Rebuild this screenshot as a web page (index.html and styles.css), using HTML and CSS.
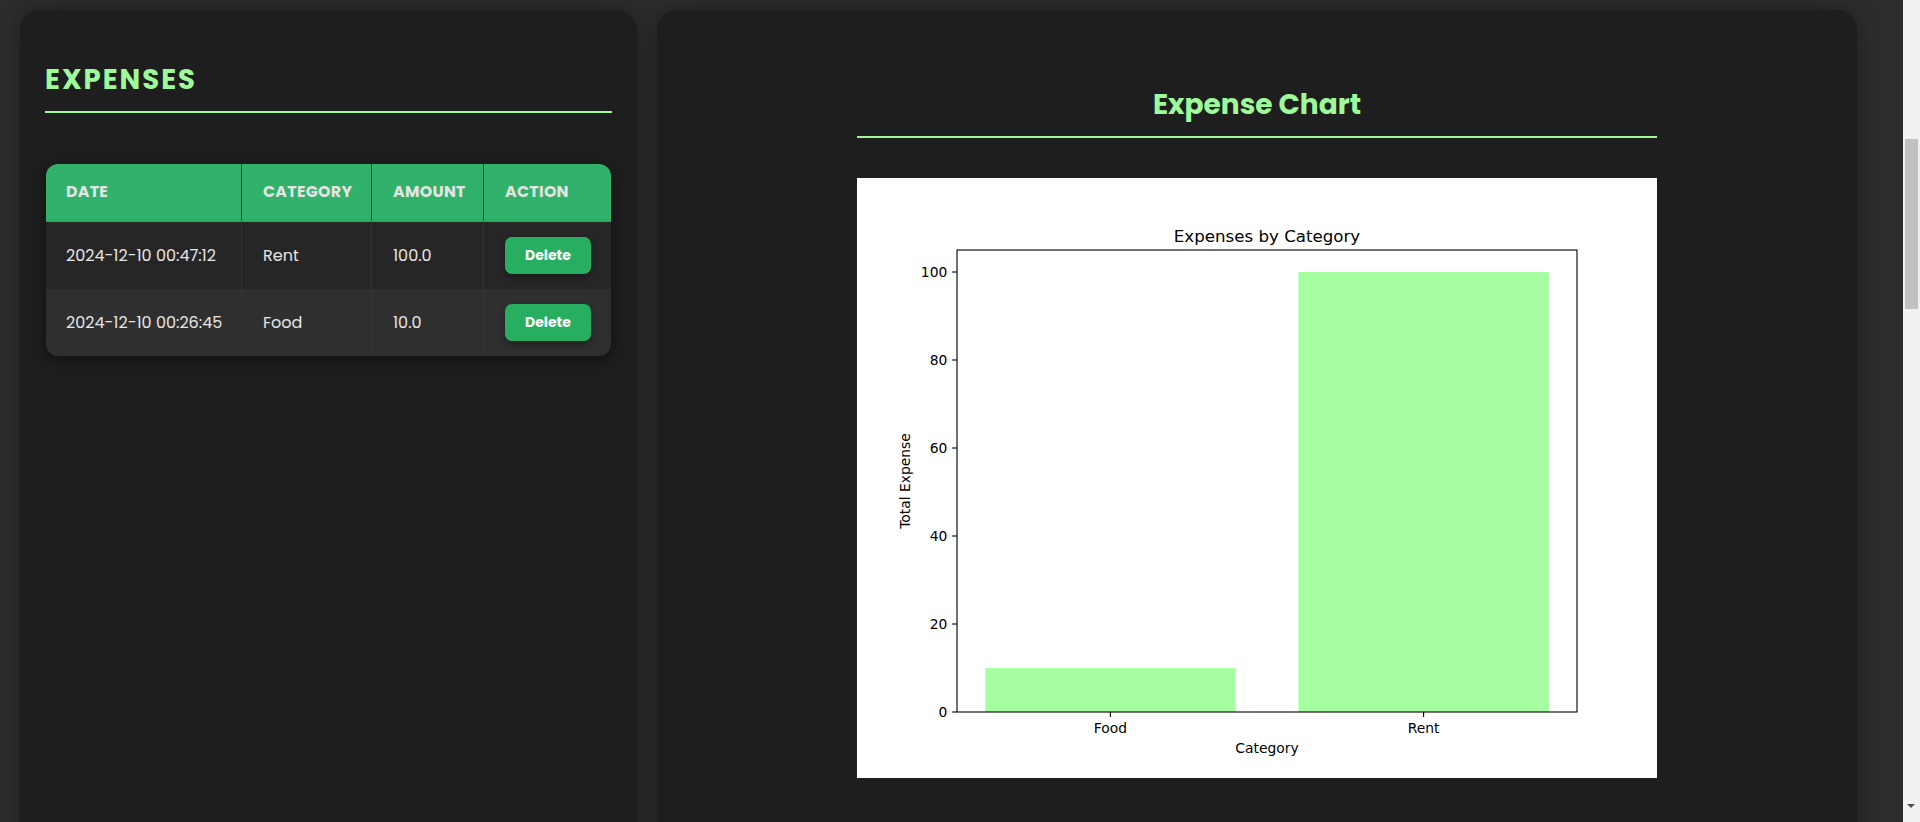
FILE: index.html
```html
<!DOCTYPE html>
<html lang="en">
<head>
<meta charset="utf-8">
<title>Expense Tracker</title>
<link rel="stylesheet" href="styles.css">
</head>
<body>
<main class="dashboard">
  <section class="panel panel-expenses">
    <h2 class="panel-title">Expenses</h2>
    <table class="expense-table">
      <colgroup>
        <col class="col-date">
        <col class="col-category">
        <col class="col-amount">
        <col class="col-action">
      </colgroup>
      <thead>
        <tr><th>Date</th><th>Category</th><th>Amount</th><th>Action</th></tr>
      </thead>
      <tbody>
        <tr>
          <td>2024-12-10 00:47:12</td><td>Rent</td><td>100.0</td>
          <td><button class="btn-delete" type="button">Delete</button></td>
        </tr>
        <tr>
          <td>2024-12-10 00:26:45</td><td>Food</td><td>10.0</td>
          <td><button class="btn-delete" type="button">Delete</button></td>
        </tr>
      </tbody>
    </table>
  </section>

  <section class="panel panel-chart">
    <div class="chart-box">
      <h2 class="chart-title">Expense Chart</h2>
      <svg class="chart" width="800" height="600" viewBox="0 0 800 600" xmlns="http://www.w3.org/2000/svg">
        <rect x="0" y="0" width="800" height="600" fill="#ffffff"/>
        <rect x="128.2" y="490" width="250.5" height="44" fill="#a5ffa1"/>
        <rect x="441.4" y="94" width="250.5" height="440" fill="#a5ffa1"/>
        <rect x="100" y="72" width="620" height="462" fill="none" stroke="#000" stroke-width="1.1"/>
        <g stroke="#000" stroke-width="1.1">
          <line x1="100" y1="534" x2="95.1" y2="534"/>
          <line x1="100" y1="446" x2="95.1" y2="446"/>
          <line x1="100" y1="358" x2="95.1" y2="358"/>
          <line x1="100" y1="270" x2="95.1" y2="270"/>
          <line x1="100" y1="182" x2="95.1" y2="182"/>
          <line x1="100" y1="94" x2="95.1" y2="94"/>
          <line x1="253.4" y1="534" x2="253.4" y2="538.9"/>
          <line x1="566.6" y1="534" x2="566.6" y2="538.9"/>
        </g>
        <g class="tick" text-anchor="end">
          <text x="90.3" y="539">0</text>
          <text x="90.3" y="451">20</text>
          <text x="90.3" y="363">40</text>
          <text x="90.3" y="275">60</text>
          <text x="90.3" y="187">80</text>
          <text x="90.3" y="99">100</text>
        </g>
        <g class="tick" text-anchor="middle">
          <text x="253.4" y="555">Food</text>
          <text x="566.6" y="555">Rent</text>
          <text x="410" y="575">Category</text>
        </g>
        <text class="tick" x="53.3" y="303" text-anchor="middle" transform="rotate(-90 53.3 303)">Total Expense</text>
        <text class="chart-heading" x="410" y="64" text-anchor="middle">Expenses by Category</text>
      </svg>
    </div>
  </section>
</main>
<div class="scrollbar" aria-hidden="true">
  <div class="scrollbar-thumb"></div>
  <div class="scrollbar-arrow"></div>
</div>
</body>
</html>
```

FILE: styles.css
```css
html, body {
  margin: 0;
  padding: 0;
}

body {
  background: #2d2d2d;
  color: #e6e6e6;
  font-family: "Poppins", "Inter", "Noto Sans", sans-serif;
}

.dashboard {
  display: grid;
  grid-template-columns: 617px 1200px;
  gap: 20px;
  padding: 10px 20px;
  align-items: stretch;
}

.panel {
  background: #1e1e1e;
  border-radius: 20px;
  box-shadow: 0 0 24px rgba(0, 0, 0, 0.35);
  padding: 25px;
  min-height: 3730px;
  box-sizing: border-box;
}

.panel-title {
  margin: 29px 0 0;
  padding-bottom: 15px;
  border-bottom: 2px solid #9efa98;
  color: #9efa98;
  font-size: 27.5px;
  line-height: 32px;
  font-weight: 700;
  letter-spacing: 2px;
  text-transform: uppercase;
}

.expense-table {
  margin-top: 51px;
  width: 565px;
  margin-left: 1px;
  table-layout: fixed;
  border-collapse: separate;
  border-spacing: 0;
  border-radius: 12px;
  overflow: hidden;
  box-shadow: 0 4px 14px rgba(0, 0, 0, 0.45);
  font-size: 16px;
}

.col-date { width: 196px; }
.col-category { width: 130px; }
.col-amount { width: 112px; }
.col-action { width: 127px; }

.expense-table th {
  background: #30b26a;
  color: #e4e4e4;
  text-align: left;
  font-weight: 700;
  font-size: 15.8px;
  letter-spacing: 0.3px;
  text-transform: uppercase;
  height: 58px;
  padding: 0 20px 0 21px;
  box-sizing: border-box;
  border-bottom: 3px solid #27ae60;
  border-right: 1px solid #1f3d2c;
}

.expense-table th:first-child,
.expense-table td:first-child {
  padding-left: 20px;
}

.expense-table th:last-child,
.expense-table td:last-child {
  border-right: none;
}

.expense-table td {
  padding: 15px 20px 15px 21px;
  border-right: 1px solid #333333;
  color: #e6e6e6;
  vertical-align: middle;
  white-space: nowrap;
}

.expense-table tbody tr:nth-child(1) td { background: #262626; }
.expense-table tbody tr:nth-child(2) td { background: #2f2f2f; }

.btn-delete {
  background: #27ae60;
  color: #ffffff;
  border: none;
  border-radius: 7px;
  font-family: inherit;
  font-weight: 700;
  font-size: 14px;
  line-height: 19px;
  padding: 9px 20px;
  box-shadow: 0 3px 6px rgba(0, 0, 0, 0.35);
  cursor: pointer;
}

.chart-box {
  width: 800px;
  margin: 0 auto;
}

.chart-title {
  margin: 52px 0 0;
  padding-bottom: 14px;
  border-bottom: 2px solid #9efa98;
  color: #9efa98;
  text-align: center;
  font-size: 28px;
  line-height: 35px;
  font-weight: 700;
}

.chart {
  display: block;
  margin-top: 40px;
}

.chart .tick {
  font-family: "DejaVu Sans", sans-serif;
  font-size: 13.89px;
  fill: #000;
}

.chart .chart-heading {
  font-family: "DejaVu Sans", sans-serif;
  font-size: 16.67px;
  fill: #000;
}

.scrollbar {
  position: fixed;
  top: 0;
  right: 0;
  width: 17px;
  height: 100vh;
  background: #f1f1f1;
}

.scrollbar-thumb {
  position: absolute;
  top: 139px;
  left: 2px;
  width: 13px;
  height: 170px;
  background: #c1c1c1;
}

.scrollbar-arrow {
  position: absolute;
  bottom: 14px;
  left: 4px;
  width: 0;
  height: 0;
  border-left: 4.5px solid transparent;
  border-right: 4.5px solid transparent;
  border-top: 4px solid #505050;
}
```
